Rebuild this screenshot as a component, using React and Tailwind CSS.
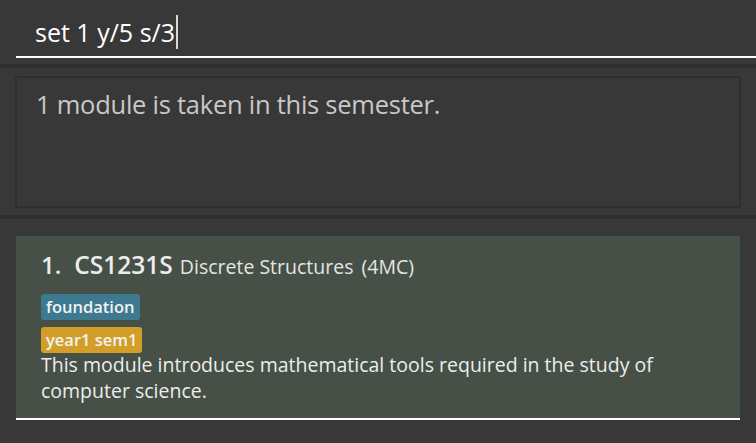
import React from 'react';

function CommandBox() {
  return (
    <div className="h-[64px] pl-4 pt-[8px]">
      <div className="h-[50px] border-b-2 border-white flex items-center pl-[19px]">
        <span className="text-[25px] text-white leading-none">set 1 y/5 s/3</span>
        <span className="w-[2px] h-[34px] bg-[#d8d8d8] ml-[1px]" />
      </div>
    </div>
  );
}

function ResultBox() {
  return (
    <div className="pl-[15px] pr-[15px] pt-[8px] pb-[7px]">
      <div className="h-[132px] border-2 border-[#2f2f2f] px-[19px] pt-[10px]">
        <p className="text-[25.5px] text-[#c8c8c8] leading-[32px] tracking-[-0.25px]">
          1 module is taken in this semester.
        </p>
      </div>
    </div>
  );
}

function ModuleCard({ index, code, name, credits, tags, description }) {
  return (
    <div className="w-[724px] bg-[#465046] border-b-2 border-white px-[25px] pt-[14px] pb-[14px]">
      <div className="flex items-baseline leading-[30px]">
        <span className="text-[24px] font-semibold text-[#ececec]">{index}.</span>
        <span className="text-[24.5px] font-semibold text-[#ececec] ml-[13px]">{code}</span>
        <span className="text-[19.5px] text-[#e4e4e4] ml-[7px]">{name}</span>
        <span className="text-[19.5px] text-[#e4e4e4] ml-[8px]">({credits}MC)</span>
      </div>
      <div className="mt-[12px] flex flex-col items-start gap-[7px]">
        {tags.map(tag => (
          <span
            key={tag.label}
            className={`h-[26px] px-[5px] rounded-[3px] text-[16.5px] font-semibold text-[#f2f2f2] leading-[26px] ${tag.color}`}
          >
            {tag.label}
          </span>
        ))}
      </div>
      <p className="text-[19.5px] text-[#ededed] leading-[26px] mt-[-1px]">{description}</p>
    </div>
  );
}

export default function App() {
  const module = {
    index: 1,
    code: 'CS1231S',
    name: 'Discrete Structures',
    credits: 4,
    tags: [
      { label: 'foundation', color: 'bg-[#3d7a8f]' },
      { label: 'year1 sem1', color: 'bg-[#d29e27]' },
    ],
    description: 'This module introduces mathematical tools required in the study of computer science.',
  };

  return (
    <div
      className="w-[756px] h-[443px] bg-[#383838] overflow-hidden"
      style={{ fontFamily: '"Open Sans", sans-serif' }}
    >
      <CommandBox />
      <div className="h-[4px] bg-[#2f2f2f]" />
      <ResultBox />
      <div className="h-[4px] bg-[#2f2f2f]" />
      <div className="pl-4 pt-[17px]">
        <ModuleCard {...module} />
      </div>
    </div>
  );
}
